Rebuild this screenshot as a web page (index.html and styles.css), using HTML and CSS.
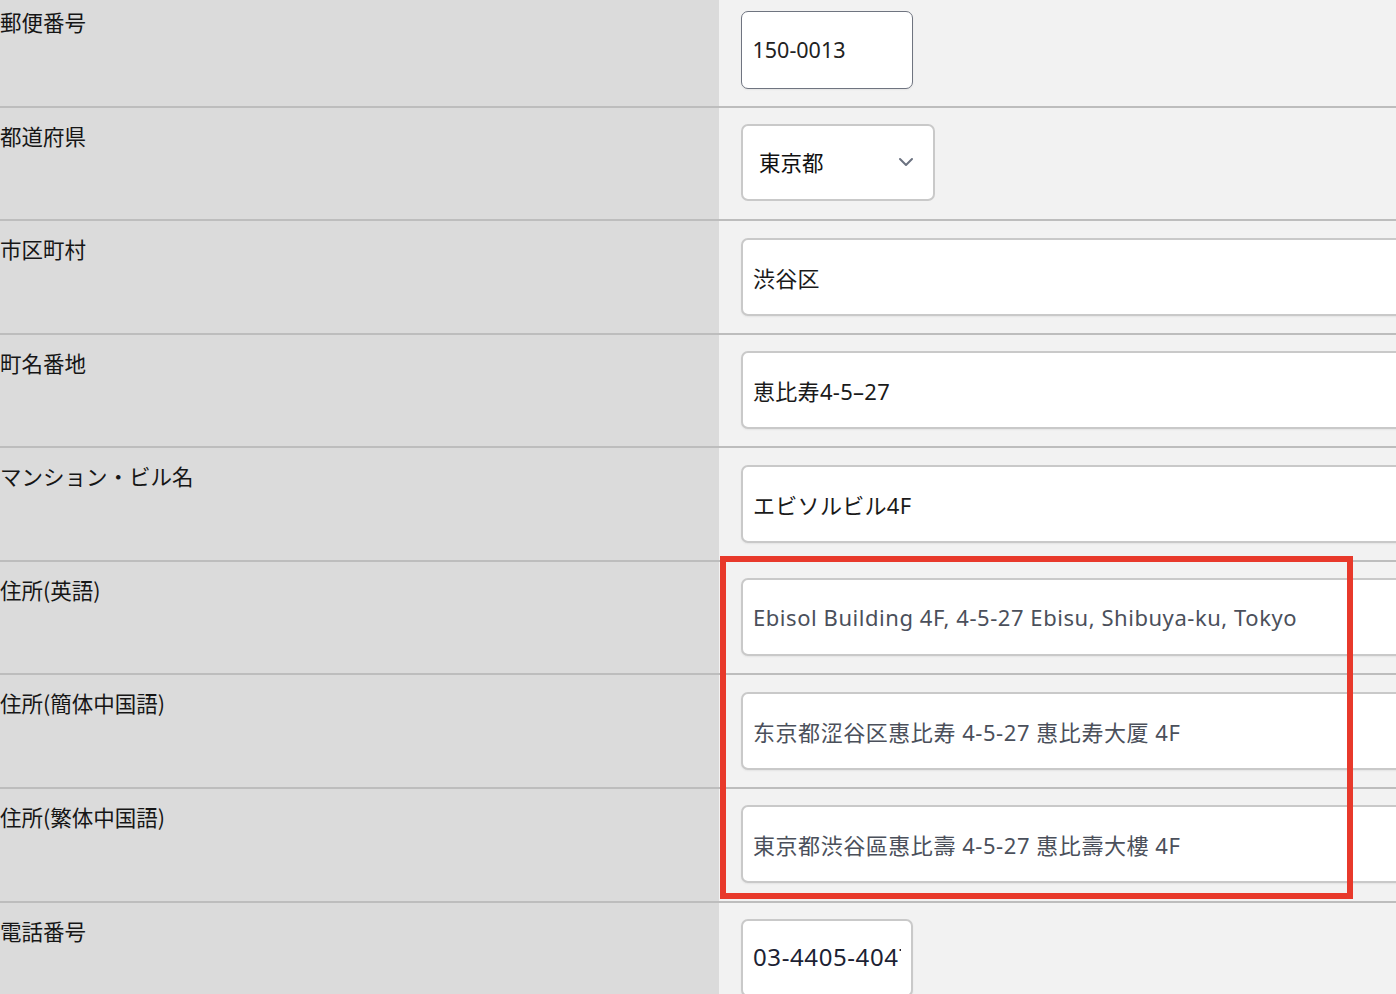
FILE: index.html
```html
<!DOCTYPE html>
<html lang="ja">
<head>
<meta charset="utf-8">
<title>住所</title>
<link rel="stylesheet" href="styles.css">
</head>
<body>
<div class="form">
  <div class="row">
    <div class="label">郵便番号</div>
    <div class="field"><input class="input short focus" type="text" value="150-0013"></div>
  </div>
  <div class="row">
    <div class="label">都道府県</div>
    <div class="field">
      <div class="select">
        <span class="select-text">東京都</span>
        <svg class="chevron" width="16" height="10" viewBox="0 0 16 10"><path d="M2 2 L8 8 L14 2" fill="none" stroke="#6b7280" stroke-width="2" stroke-linecap="round" stroke-linejoin="round"/></svg>
      </div>
    </div>
  </div>
  <div class="row">
    <div class="label">市区町村</div>
    <div class="field"><input class="input wide" type="text" value="渋谷区"></div>
  </div>
  <div class="row">
    <div class="label">町名番地</div>
    <div class="field"><input class="input wide" type="text" value="恵比寿4-5–27"></div>
  </div>
  <div class="row">
    <div class="label">マンション・ビル名</div>
    <div class="field"><input class="input wide" type="text" value="エビソルビル4F"></div>
  </div>
  <div class="row">
    <div class="label">住所(英語)</div>
    <div class="field"><input class="input wide muted" type="text" value="Ebisol Building 4F, 4-5-27 Ebisu, Shibuya-ku, Tokyo"></div>
  </div>
  <div class="row">
    <div class="label">住所(簡体中国語)</div>
    <div class="field"><input class="input wide muted" type="text" value="东京都涩谷区惠比寿 4-5-27 惠比寿大厦 4F"></div>
  </div>
  <div class="row">
    <div class="label">住所(繁体中国語)</div>
    <div class="field"><input class="input wide muted" type="text" value="東京都渋谷區惠比壽 4-5-27 惠比壽大樓 4F"></div>
  </div>
  <div class="row">
    <div class="label">電話番号</div>
    <div class="field"><input class="input short dark" type="text" value="03-4405-4047"></div>
  </div>
  <div class="highlight"></div>
</div>
</body>
</html>
```
FILE: styles.css
```css
html, body {
  margin: 0;
  padding: 0;
  background: #f2f2f2;
  overflow: hidden;
}
body {
  font-family: "Noto Sans CJK JP", "Noto Sans", sans-serif;
}
.form {
  position: relative;
  margin-top: -6px;
}
.row {
  display: flex;
  height: 111.57px;
  border-bottom: 2px solid #bdbdbd;
  overflow: hidden;
}
.label {
  width: 719px;
  flex: none;
  background: #dbdbdb;
  box-sizing: border-box;
  padding-top: 12px;
  font-size: 21.5px;
  line-height: 1.5;
  color: #161616;
}
.field {
  flex: 1;
  background: #f2f2f2;
  padding: 16.5px 0 0 22px;
  box-sizing: border-box;
}
.input {
  box-sizing: border-box;
  height: 78px;
  border: 2px solid #c9c9c9;
  border-radius: 7px;
  background: #fff;
  padding: 0 10px;
  margin: 0;
  font-family: "Noto Sans", "Noto Sans CJK JP", sans-serif;
  font-size: 22px;
  letter-spacing: 0.3px;
  color: #1a1a1a;
  outline: none;
  box-shadow: 0 1px 2px rgba(0,0,0,0.06);
  display: block;
}
.short { width: 172px; }
.wide { width: 760px; }
.focus {
  border: 1.5px solid #6f7480;
  padding: 0 10.5px;
  font-size: 21.5px;
  letter-spacing: 0;
  color: #222;
}
.muted {
  color: #4b505b;
  letter-spacing: 0.55px;
}
.dark {
  color: #1c2233;
  font-size: 24px;
  letter-spacing: 0.6px;
  padding-bottom: 3px;
}
.select {
  box-sizing: border-box;
  width: 194px;
  height: 77px;
  border: 2px solid #c9c9c9;
  border-radius: 7px;
  background: #fff;
  display: flex;
  align-items: center;
  justify-content: space-between;
  padding: 0 19px 0 16px;
  font-size: 21.5px;
  color: #111;
  margin-top: -0.5px;
}
.select-text { line-height: 1; }
.chevron { display: block; }
.highlight {
  position: absolute;
  left: 720px;
  top: 562px;
  width: 633px;
  height: 343px;
  box-sizing: border-box;
  border: 6.5px solid #e8392b;
  pointer-events: none;
}
```
